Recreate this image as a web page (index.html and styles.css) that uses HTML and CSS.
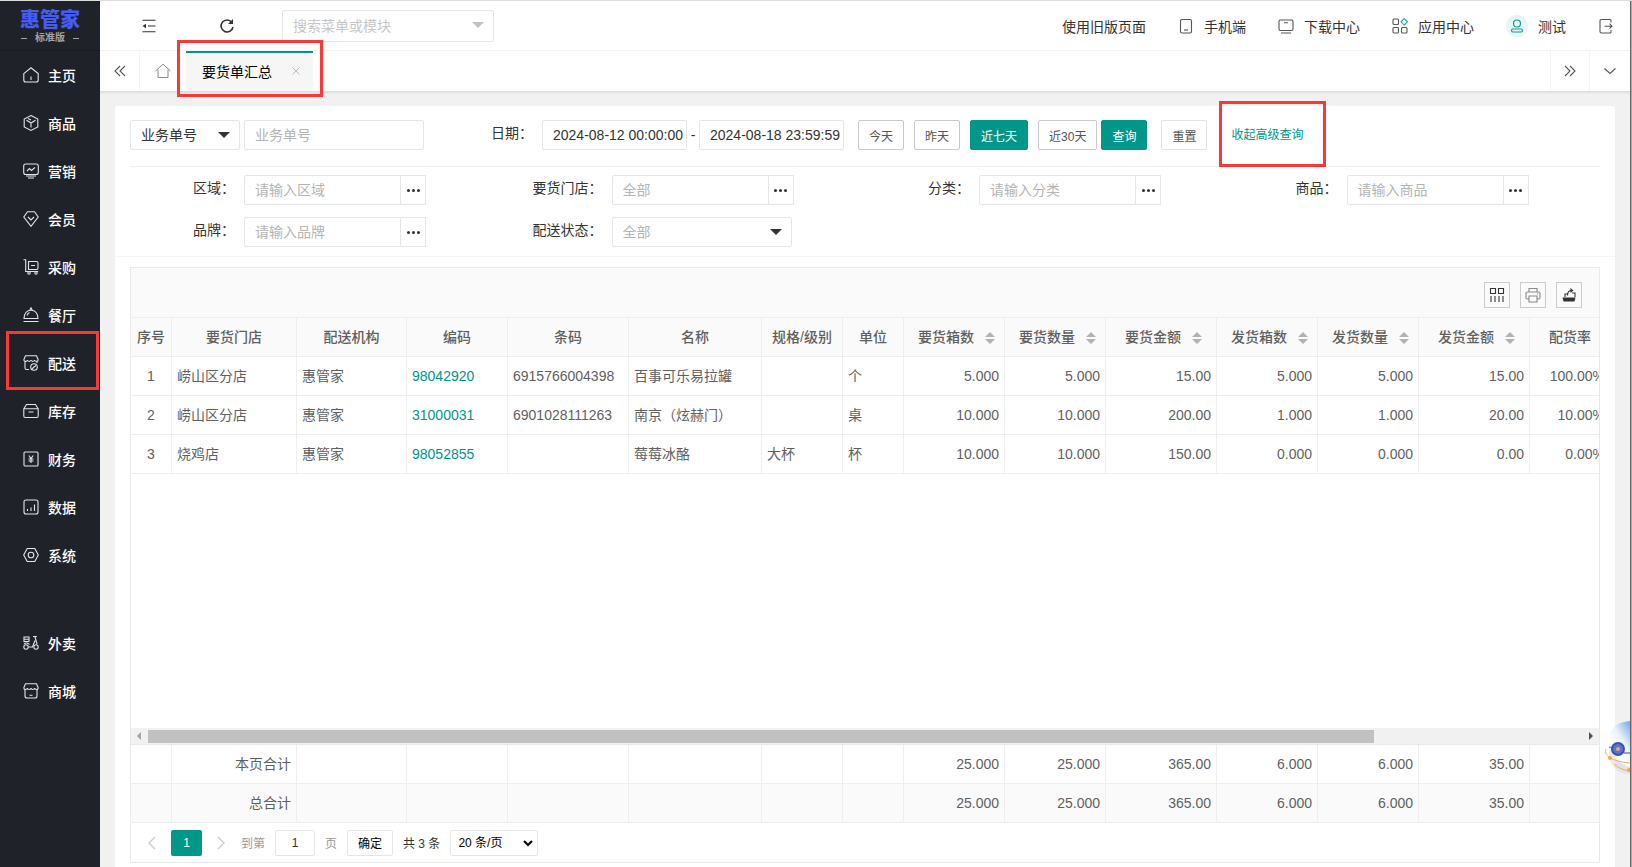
FILE: index.html
```
<!DOCTYPE html>
<html lang="zh-CN">
<head>
    <meta charset="UTF-8">
    <meta name="viewport" content="width=device-width, initial-scale=1.0">
    <title>要货单汇总</title>
    <link rel="stylesheet" href="styles.css">
</head>
<body>
    <div class="app">
        <nav class="side">
            <div class="logo">
                <strong class="logo-name">惠管家</strong>
                <span class="logo-sub">标准版</span>
            </div>
            <a class="nav" href="#"><svg class="ico" viewBox="0 0 16 16"><path d="M.8 6.6 8 .8l7.200 5.800V13a2 2 0 0 1-2 2H2.800a2 2 0 0 1-2-2zM8 9.500V13"/></svg>主页</a>
            <a class="nav" href="#"><svg class="ico" viewBox="0 0 16 16"><path d="M8 .6 14.800 4v8L8 15.400 1.200 12V4zM3.500 5.300 8 8l4.500-2.700M8 8v4.500M5 3.500 8 5"/></svg>商品</a>
            <a class="nav" href="#"><svg class="ico" viewBox="0 0 16 16"><rect x=".7" y="1" width="14.600" height="10.500" rx="2"/><path d="m4 8 2.500-2.500L8.500 7.500 12 4.500M3 13h10M5 15h6"/></svg>营销</a>
            <a class="nav" href="#"><svg class="ico" viewBox="0 0 16 16"><path d="M4.500.8h7l3.700 5.200L8 15.300.8 6zM5 6l3 3 3-3"/></svg>会员</a>
            <a class="nav" href="#"><svg class="ico" viewBox="0 0 16 16"><path d="M.5.8h2.200v11.700h12.500M5.500 2.500h8a1.500 1.500 0 0 1 1.500 1.500v5a1.500 1.500 0 0 1-1.500 1.500h-8zM8 6.500h4"/><circle cx="6" cy="14" r="1.200"/><circle cx="13" cy="14" r="1.200"/></svg>采购</a>
            <a class="nav" href="#"><svg class="ico" viewBox="0 0 16 16"><path d="M1 11.500C1.200 6.500 4 3.200 8 3.200s6.800 3.300 7 8.300zM6.800 3 8 .8 9.200 3M.5 14.500h15M4 8.500C4.500 7 5.300 6.200 6.500 5.600"/></svg>餐厅</a>
            <a class="nav mark" href="#"><svg class="ico" viewBox="0 0 16 16"><path d="M6 14.500H3.500a1.500 1.500 0 0 1-1.500-1.500V6.500M2.500.8h11l1.700 4c0 2-3.200 2-3.600.2-.4 1.800-3.200 1.800-3.600 0-.4 1.800-3.200 1.800-3.600 0C4 7 .8 6.800.8 4.800zM14 6.500V8"/><circle cx="11" cy="12" r="3.300"/><path d="m11 12 2-1.500M8.500 14.500l2.500-2.500"/></svg>配送</a>
            <a class="nav" href="#"><svg class="ico" viewBox="0 0 16 16"><path d="M.8 5.800 3.500 1.500h9l2.700 4.300V13a1.500 1.500 0 0 1-1.500 1.500H2.300A1.500 1.500 0 0 1 .8 13zM.8 5.800h14.400M5.500 9h5"/></svg>库存</a>
            <a class="nav" href="#"><svg class="ico" viewBox="0 0 16 16"><rect x="1" y="1" width="14" height="14" rx="1"/><path d="m5.800 4.500 2.200 3 2.200-3M8 7.500V12M5.500 8h5M5.500 10h5"/></svg>财务</a>
            <a class="nav" href="#"><svg class="ico" viewBox="0 0 16 16"><rect x="1" y="1" width="14" height="14" rx="2"/><path d="M4.500 12v-2M8 12V8.500M11.500 12V5.500"/></svg>数据</a>
            <a class="nav" href="#"><svg class="ico" viewBox="0 0 16 16"><path d="M4.200 1.500h7.600L15.300 8l-3.500 6.500H4.200L.7 8z"/><circle cx="8" cy="8" r="2.800"/></svg>系统</a>
            <a class="nav split" href="#"><svg class="ico" viewBox="0 0 16 16"><path d="M1 2h5v4.500H1zM1 4.200h5M10 1.500h3l-1 1M12 2l2 7M5.500 12h4L12 5.500M1 9c1-1.500 4-1.500 5.500.5"/><circle cx="3" cy="12" r="2.200"/><circle cx="13" cy="12" r="2.200"/></svg>外卖</a>
            <a class="nav" href="#"><svg class="ico" viewBox="0 0 16 16"><path d="M2 6.500V13a2 2 0 0 0 2 2h8a2 2 0 0 0 2-2V6.500M2.500.8h11l1.700 4c0 2.200-3.200 2.200-3.600.2-.4 2-3.200 2-3.600 0-.4 2-3.200 2-3.600 0C4 7 .8 7 .8 4.800zM6.500 12.200h3"/></svg>商城</a>
        </nav>

        <div class="page">
            <header class="top">
                <button class="tool" aria-label="收起菜单"><svg class="ico dark" viewBox="0 0 16 16"><path d="M1.500 2.200h13M7 8h7.500M1.500 13.800h13"/><path class="fill" d="M1.500 8 5 5.800v4.400z"/></svg></button>
                <button class="tool" aria-label="刷新"><svg class="ico dark bold" viewBox="0 0 16 16"><path d="M12.800 4.200A6 6 0 1 0 14 9"/><path class="fill" d="M14 1v5H9z"/></svg></button>
                <div class="search pick">
                    <input type="text" aria-label="搜索" placeholder="搜索菜单或模块">
                </div>
                <div class="links">
                    <a href="#">使用旧版页面</a>
                    <a href="#"><svg class="ico gray" viewBox="0 0 16 16"><rect x="2.500" y="1.500" width="11" height="13.500" rx="1.500"/><path d="M6 12h4"/></svg>手机端</a>
                    <a href="#"><svg class="ico gray" viewBox="0 0 16 16"><rect x="1" y="2" width="14" height="10.500" rx="1.500"/><path d="M6 4.800h4M3 15h10"/></svg>下载中心</a>
                    <a href="#"><svg class="ico gray" viewBox="0 0 16 16"><rect x="1" y="1" width="5.500" height="5.500" rx="1"/><rect x="1" y="9.500" width="5.500" height="5.500" rx="1"/><rect x="9.500" y="9.500" width="5.500" height="5.500" rx="1"/><path class="teal" d="m12.200.6 3.200 3.200L12.200 7 9 3.800z"/></svg>应用中心</a>
                    <a href="#"><svg class="face" viewBox="0 0 22 22"><circle class="disc" cx="11" cy="11" r="11"/><circle cx="11" cy="8.500" r="3.500"/><rect x="5.500" y="14" width="11" height="3" rx="1.500"/></svg>测试</a>
                    <a href="#" aria-label="退出"><svg class="ico gray" viewBox="0 0 16 16"><path d="M13 4.500V2.500a1 1 0 0 0-1-1H3a1 1 0 0 0-1 1v11a1.500 1.500 0 0 0 1.500 1.500H12a1 1 0 0 0 1-1v-2M6.500 8.200H14M11.500 5.700l2.500 2.500-2.500 2.500"/></svg></a>
                </div>
            </header>

            <div class="tabs">
                <button class="tab-btn" aria-label="向左"><svg class="ico gray" viewBox="0 0 16 16"><path d="M8 3 3 8l5 5M13 3 8 8l5 5"/></svg></button>
                <button class="tab-home" aria-label="首页"><svg class="ico light" viewBox="0 0 16 16"><path d="M.5 8 8 1.200 15.500 8M3 6.500v8h10v-8"/></svg></button>
                <div class="tab mark">
                    要货单汇总
                    <button class="close" aria-label="关闭"><svg viewBox="0 0 10 10"><path d="m1.500 1.500 7 7M8.500 1.500l-7 7"/></svg></button>
                </div>
                <button class="tab-btn end" aria-label="向右"><svg class="ico gray" viewBox="0 0 16 16"><path d="m3 3 5 5-5 5M8 3l5 5-5 5"/></svg></button>
                <button class="tab-btn" aria-label="更多"><svg class="ico gray" viewBox="0 0 16 16"><path d="m2.500 5.500 5.500 5 5.500-5"/></svg></button>
            </div>

            <main class="main">
                <div class="card">
                    <form class="filter">
                        <div class="line">
                            <div class="pick kind"><select aria-label="单号类型"><option>业务单号</option></select></div>
                            <input class="field" type="text" aria-label="业务单号" placeholder="业务单号">
                            <label class="label date-label" for="start">日期：</label>
                            <input class="date" id="start" type="text" value="2024-08-12 00:00:00">
                            <span class="dash">-</span>
                            <input class="date" type="text" aria-label="结束日期" value="2024-08-18 23:59:59">
                            <div class="days">
                                <button class="btn" type="button">今天</button>
                                <button class="btn" type="button">昨天</button>
                                <button class="btn on" type="button">近七天</button>
                                <button class="btn" type="button">近30天</button>
                            </div>
                            <button class="btn on" type="button">查询</button>
                            <button class="btn reset" type="reset">重置</button>
                            <a class="more mark" href="#">收起高级查询</a>
                        </div>
                        <div class="grid">
                            <div class="item"><label class="label" for="area">区域：</label><input class="part" id="area" type="text" placeholder="请输入区域"><button class="dots" type="button" aria-label="选择区域"></button></div>
                            <div class="item"><label class="label" for="shop">要货门店：</label><input class="part" id="shop" type="text" placeholder="全部"><button class="dots" type="button" aria-label="选择门店"></button></div>
                            <div class="item"><label class="label" for="type">分类：</label><input class="part" id="type" type="text" placeholder="请输入分类"><button class="dots" type="button" aria-label="选择分类"></button></div>
                            <div class="item"><label class="label" for="goods">商品：</label><input class="part" id="goods" type="text" placeholder="请输入商品"><button class="dots" type="button" aria-label="选择商品"></button></div>
                            <div class="item"><label class="label" for="brand">品牌：</label><input class="part" id="brand" type="text" placeholder="请输入品牌"><button class="dots" type="button" aria-label="选择品牌"></button></div>
                            <div class="item"><label class="label" for="state">配送状态：</label><div class="pick state"><select id="state"><option>全部</option></select></div></div>
                        </div>
                    </form>

                    <section class="list">
                        <div class="bar">
                            <button aria-label="筛选列"><svg class="ico dark" viewBox="0 0 16 16"><path d="M1.500 1.500h5v5h-5zM9.500 1.500h5v5h-5zM2 9v6M6 9v6M10 9v6M14 9v6"/></svg></button>
                            <button aria-label="打印"><svg class="ico print" viewBox="0 0 16 16"><path d="M4 5V1.500h8V5M4 12H2.500A1.500 1.500 0 0 1 1 10.500v-4A1.500 1.500 0 0 1 2.500 5h11A1.500 1.500 0 0 1 15 6.500v4a1.500 1.500 0 0 1-1.500 1.500H12M4 9h8v6H4zM12 7h1"/></svg></button>
                            <button aria-label="导出"><svg class="ico dark" viewBox="0 0 16 16"><path class="fill" d="M1.500 10.500h13l-1 4h-11z"/><path d="M4 10V7h2.500M11 6h3v4M6.500 8.500C6.500 5 8 3.500 11 3.500"/><path class="fill" d="m9.500 1 3 2.500-3 2.500z"/></svg></button>
                        </div>
                        <div class="view">
                            <table class="table">
                                <colgroup><col class="w41"><col class="w125"><col class="w110"><col class="w101"><col class="w121"><col class="w133"><col class="w81"><col class="w61"><col class="w101"><col class="w101"><col class="w111"><col class="w101"><col class="w101"><col class="w111"><col class="w81"></colgroup>
                                <thead>
                                    <tr><th>序号</th><th>要货门店</th><th>配送机构</th><th>编码</th><th>条码</th><th>名称</th><th>规格/级别</th><th>单位</th><th class="sort">要货箱数<i></i></th><th class="sort">要货数量<i></i></th><th class="sort">要货金额<i></i></th><th class="sort">发货箱数<i></i></th><th class="sort">发货数量<i></i></th><th class="sort">发货金额<i></i></th><th>配货率</th></tr>
                                </thead>
                                <tbody>
                                    <tr><td class="mid">1</td><td>崂山区分店</td><td>惠管家</td><td><a href="#">98042920</a></td><td>6915766004398</td><td>百事可乐易拉罐</td><td></td><td>个</td><td class="num">5.000</td><td class="num">5.000</td><td class="num">15.00</td><td class="num">5.000</td><td class="num">5.000</td><td class="num">15.00</td><td class="num">100.00%</td></tr>
                                    <tr><td class="mid">2</td><td>崂山区分店</td><td>惠管家</td><td><a href="#">31000031</a></td><td>6901028111263</td><td>南京（炫赫门）</td><td></td><td>桌</td><td class="num">10.000</td><td class="num">10.000</td><td class="num">200.00</td><td class="num">1.000</td><td class="num">1.000</td><td class="num">20.00</td><td class="num">10.00%</td></tr>
                                    <tr><td class="mid">3</td><td>烧鸡店</td><td>惠管家</td><td><a href="#">98052855</a></td><td></td><td>莓莓冰酪</td><td>大杯</td><td>杯</td><td class="num">10.000</td><td class="num">10.000</td><td class="num">150.00</td><td class="num">0.000</td><td class="num">0.000</td><td class="num">0.00</td><td class="num">0.00%</td></tr>
                                </tbody>
                            </table>
                        </div>
                        <div class="scroll"><span class="left"></span><span class="rail"><span class="thumb"></span></span><span class="right"></span></div>
                        <div class="total">
                            <table class="table">
                                <colgroup><col class="w41"><col class="w125"><col class="w110"><col class="w101"><col class="w121"><col class="w133"><col class="w81"><col class="w61"><col class="w101"><col class="w101"><col class="w111"><col class="w101"><col class="w101"><col class="w111"><col class="w81"></colgroup>
                                <tbody>
                                    <tr><td></td><td class="num">本页合计</td><td></td><td></td><td></td><td></td><td></td><td></td><td class="num">25.000</td><td class="num">25.000</td><td class="num">365.00</td><td class="num">6.000</td><td class="num">6.000</td><td class="num">35.00</td><td></td></tr>
                                    <tr class="all"><td></td><td class="num">总合计</td><td></td><td></td><td></td><td></td><td></td><td></td><td class="num">25.000</td><td class="num">25.000</td><td class="num">365.00</td><td class="num">6.000</td><td class="num">6.000</td><td class="num">35.00</td><td></td></tr>
                                </tbody>
                            </table>
                        </div>
                        <div class="pager">
                            <button class="arrow" aria-label="上一页"><svg viewBox="0 0 8 14"><path d="M7 1 1 7l6 6"/></svg></button>
                            <button class="now">1</button>
                            <button class="arrow" aria-label="下一页"><svg viewBox="0 0 8 14"><path d="m1 1 6 6-6 6"/></svg></button>
                            <label class="pale" for="go">到第</label>
                            <input class="go" id="go" type="text" value="1">
                            <span class="pale">页</span>
                            <button class="ok">确定</button>
                            <span>共 3 条</span>
                            <div class="size">
                                <select aria-label="每页条数"><option>20 条/页</option></select>
                                <svg viewBox="0 0 10 7"><path d="m1 1 4 4 4-4"/></svg>
                            </div>
                        </div>
                    </section>
                </div>
            </main>
        </div>
        <div class="edge"></div>

        <svg class="robot" viewBox="0 0 28 60">
            <defs>
                <linearGradient id="skin" x1=".9" y1="0" x2=".2" y2="1">
                    <stop offset="0" stop-color="#7fb0ec"/>
                    <stop offset=".4" stop-color="#e8f3fd"/>
                    <stop offset=".7" stop-color="#fff"/>
                    <stop offset="1" stop-color="#b9dcf8"/>
                </linearGradient>
            </defs>
            <ellipse cx="27" cy="36" rx="20" ry="20" fill="#d5dbe6" opacity=".6"/>
            <path d="M28 3C14 4 6 12 7 24c0 14 9 22 21 25z" fill="url(#skin)"/>
            <path d="M7 29c2 0 3 1 4 2M22 35h6" stroke="#3c4a94" fill="none"/>
            <circle cx="16" cy="31" r="7" fill="#3b4fae"/>
            <circle cx="16" cy="31" r="5" fill="#5b74cd"/>
            <circle cx="16" cy="31" r="2" fill="#f6a64b"/>
            <path d="M4 31c-3 8 10 13 24 14M12 46c4 4 9 6 16 7" stroke="#f4ac5c" fill="none"/>
            <circle cx="8" cy="40" r="2" fill="#fba53c"/>
            <circle cx="27" cy="52" r="2" fill="#fba53c"/>
        </svg>
    </div>
</body>
</html>
```
FILE: styles.css
```
*{
    margin: 0;
    padding: 0;
    box-sizing: border-box;
}
body,input,select,button{
    font-family: "Liberation Sans","Noto Sans CJK SC",sans-serif;
    font-size: 14px;
    color: #333;
}
a{
    color: inherit;
    text-decoration: none;
}
button{
    border: none;
    background: none;
    cursor: pointer;
}
input,select{
    outline: none;
    border: 1px solid #e6e6e6;
    border-radius: 2px;
    background: #fff;
}
::placeholder{
    color: #b4b4b4;
}
.app{
    display: flex;
    height: 100vh;
    border-top: 1px solid #ddd;
    position: relative;
    overflow: hidden;
}
.ico{
    width: 16px;
    height: 16px;
    fill: none;
    stroke: #e4e5e6;
    stroke-width: 1.1;
    flex: none;
}
.ico.dark{
    stroke: #333;
}
.ico.dark .fill{
    fill: #333;
    stroke: none;
}
.ico.bold{
    stroke-width: 1.6;
}
.ico.gray{
    stroke: #555;
}
.ico.light{
    stroke: #888;
    stroke-width: 1;
}
.ico .teal{
    stroke: #1aa89b;
}

/* 红框标注 */
.mark{
    position: relative;
}
.mark::after{
    content: "";
    position: absolute;
    border: 3px solid #fb3838;
    pointer-events: none;
    z-index: 5;
}

/* 左侧菜单 */
.side{
    width: 100px;
    flex: none;
    background: #20222a;
}
.logo{
    height: 50px;
    padding-top: 8px;
    border-bottom: 1px solid #1a1c22;
    display: flex;
    flex-direction: column;
    align-items: center;
}
.logo-name{
    font-size: 20px;
    font-weight: 900;
    line-height: 22px;
    color: #465cf2;
}
.logo-sub{
    display: flex;
    align-items: center;
    gap: 8px;
    font-size: 10px;
    font-weight: bold;
    line-height: 14px;
    color: #a3a5aa;
}
.logo-sub::before,.logo-sub::after{
    content: "";
    width: 6px;
    height: 1px;
    background: #a3a5aa;
}
.nav{
    height: 48px;
    display: flex;
    align-items: center;
    gap: 9px;
    padding-left: 23px;
    color: #fff;
    font-weight: 500;
}
.nav.split{
    margin-top: 40px;
}
.nav.mark::after{
    left: 6px;
    right: 1px;
    top: -8px;
    bottom: -3px;
}

/* 顶部 */
.page{
    flex: 1;
    min-width: 0;
    display: flex;
    flex-direction: column;
    background: #f1f1f1;
}
.top{
    height: 50px;
    flex: none;
    display: flex;
    align-items: center;
    padding: 0 16px 0 41px;
    background: #fff;
    border-bottom: 1px solid #f3f3f3;
}
.tool{
    display: flex;
    margin-right: 62px;
}
.tool + .tool{
    margin-right: 47px;
}
.pick{
    position: relative;
}
.pick::after{
    content: "";
    position: absolute;
    right: 10px;
    top: 12px;
    border: 6px solid transparent;
    border-top-color: #333;
    border-bottom: none;
    pointer-events: none;
}
.search{
    width: 212px;
}
.search::after{
    border-top-color: #c2c2c2;
}
.search input{
    width: 100%;
    height: 32px;
    padding: 0 10px;
}
.search ::placeholder{
    color: #c6c6c6;
}
.links{
    margin-left: auto;
    display: flex;
    align-items: center;
    gap: 32px;
}
.links a{
    display: flex;
    align-items: center;
    gap: 10px;
}
.face{
    width: 22px;
    height: 22px;
    fill: none;
    stroke: #169c8f;
    stroke-width: 1.2;
}
.face .disc{
    fill: #e6f5f3;
    stroke: none;
}

/* 标签栏 */
.tabs{
    height: 41px;
    flex: none;
    display: flex;
    background: #fff;
    border-bottom: 1px solid #ddd;
    box-shadow: 0 1px 2px rgba(0,0,0,.08);
    position: relative;
}
.tab-btn{
    width: 40px;
    display: flex;
    align-items: center;
    justify-content: center;
    border-right: 1px solid #f3f3f3;
}
.tab-btn.end{
    margin-left: auto;
    border-left: 1px solid #f3f3f3;
}
.tab-btn:last-child{
    border-right: none;
}
.tab-home{
    width: 46px;
    display: flex;
    align-items: center;
    justify-content: center;
}
.tab{
    display: flex;
    align-items: center;
    gap: 19px;
    padding: 0 12px 2px 16px;
    background: #f6f6f6;
    border-top: 2px solid #009688;
    color: #000;
}
.tab.mark::after{
    left: -9px;
    right: -10px;
    top: -13px;
    bottom: -6px;
}
.close{
    display: flex;
}
.close svg{
    width: 10px;
    height: 10px;
    stroke: #bbb;
}

.main{
    flex: 1;
    min-height: 0;
    padding: 14px 15px 0;
    display: flex;
}
.card{
    flex: 1;
    min-width: 0;
    display: flex;
    flex-direction: column;
    background: #fff;
    border-radius: 2px 2px 0 0;
}

/* 查询条件 */
.filter{
    padding: 14px 15px 9px;
    border-bottom: 1px solid #f6f6f6;
}
.line{
    display: flex;
    padding-bottom: 16px;
    border-bottom: 1px solid #eee;
}
.filter input,.filter select{
    height: 30px;
    padding: 0 10px;
}
.filter select{
    width: 100%;
    appearance: none;
}
.kind{
    width: 110px;
    margin-right: 4px;
}
.field{
    width: 180px;
}
.label{
    width: 114px;
    padding-right: 9px;
    line-height: 26px;
    text-align: right;
}
.date-label{
    width: 118px;
}
.filter .date{
    width: 145px;
    padding-right: 0;
}
.dash{
    width: 12px;
    line-height: 30px;
    text-align: center;
}
.days{
    display: flex;
    gap: 10px;
    margin: 0 4px 0 14px;
}
.btn{
    height: 30px;
    padding: 0 10px;
    border: 1px solid #c9c9c9;
    border-radius: 2px;
    background: #fff;
    font-size: 12px;
    color: #555;
}
.btn.on{
    background: #009688;
    border-color: #009688;
    color: #fff;
}
.btn.reset{
    margin: 0 24px 0 14px;
    border-color: #e2e2e2;
}
.more{
    font-size: 12px;
    line-height: 30px;
    color: #009688;
}
.more.mark::after{
    left: -12px;
    right: -23px;
    top: -19px;
    bottom: -17px;
}
.grid{
    display: grid;
    grid-template-columns: repeat(4,1fr);
    row-gap: 12px;
    padding-top: 8px;
}
.item{
    display: flex;
}
.filter .part{
    width: 157px;
    border-radius: 2px 0 0 2px;
}
.dots{
    width: 25px;
    border: 1px solid #e6e6e6;
    border-left: none;
    display: flex;
    align-items: center;
    justify-content: center;
}
.dots::before{
    content: "";
    width: 3px;
    height: 3px;
    border-radius: 50%;
    background: #333;
    box-shadow: -5px 0 #333, 5px 0 #333;
}
.state{
    width: 180px;
}
.state select{
    color: #b4b4b4;
}

/* 表格 */
.list{
    flex: 1;
    min-height: 0;
    display: flex;
    flex-direction: column;
    margin: 10px 15px 4px;
    border: 1px solid #e9e9e9;
}
.bar{
    height: 50px;
    flex: none;
    display: flex;
    justify-content: flex-end;
    gap: 10px;
    padding: 14px 17px 0 0;
    background: #fafafa;
    border-bottom: 1px solid #eee;
}
.bar button{
    width: 26px;
    height: 26px;
    border: 1px solid #ccc;
    display: flex;
    align-items: center;
    justify-content: center;
}
.ico.print{
    stroke: #888;
}
.view{
    flex: 1;
    min-height: 0;
    overflow: hidden;
}
.table{
    width: 1480px;
    table-layout: fixed;
    border-collapse: separate;
    border-spacing: 0;
    color: #5f5f5f;
}
.w41{ width: 41px; }
.w61{ width: 61px; }
.w81{ width: 81px; }
.w101{ width: 101px; }
.w110{ width: 110px; }
.w111{ width: 111px; }
.w121{ width: 121px; }
.w125{ width: 125px; }
.w133{ width: 133px; }
.table th,.table td{
    height: 39px;
    padding: 0 5px;
    border-right: 1px solid #eee;
    border-bottom: 1px solid #eee;
    line-height: 28px;
    text-align: left;
    white-space: nowrap;
}
.table th{
    background: #fafafa;
    font-weight: 500;
    text-align: center;
}
.table th.sort{
    padding-left: 10px;
}
.sort i{
    display: inline-block;
    width: 10px;
    height: 12px;
    margin-left: 11px;
    vertical-align: -2px;
    background: #b2b2b2;
    clip-path: polygon(50% 0,100% 42%,0 42%,0 58%,100% 58%,50% 100%,0 58%,0 42%);
}
.table .mid{
    text-align: center;
}
.table .num{
    text-align: right;
}
.table a{
    color: #009688;
}
.scroll{
    height: 17px;
    flex: none;
    display: flex;
    align-items: center;
    padding: 0 6px;
    background: #f1f1f1;
    border-bottom: 1px solid #e9e9e9;
}
.scroll .left,.scroll .right{
    border: 4px solid transparent;
}
.scroll .left{
    border-left: none;
    border-right-color: #a3a3a3;
}
.scroll .right{
    border-right: none;
    border-left-color: #505050;
}
.rail{
    flex: 1;
    margin: 0 7px;
}
.thumb{
    display: block;
    width: 85.5%;
    height: 13px;
    background: #c1c1c1;
}
.total{
    flex: none;
    overflow: hidden;
}
.all{
    background: #fafafa;
}

/* 分页 */
.pager{
    height: 39px;
    flex: none;
    display: flex;
    align-items: center;
    gap: 10px;
    padding: 0 0 0 17px;
    font-size: 12px;
}
.pager button,.pager input,.pager select{
    height: 26px;
    font-size: 12px;
}
.arrow{
    width: 8px;
    margin-right: 5px;
    display: flex;
    align-items: center;
}
.arrow svg{
    width: 8px;
    height: 14px;
    fill: none;
    stroke: #ccc;
    stroke-width: 1.4;
}
.now{
    width: 31px;
    background: #009688;
    border-radius: 2px;
    color: #fff;
}
.now + .arrow{
    margin: 0 6px 0 5px;
}
.pale{
    color: #999;
}
.go{
    width: 40px;
    text-align: center;
}
.ok{
    width: 46px;
    border: 1px solid #e6e6e6;
    border-radius: 2px;
    color: #000;
}
.size{
    position: relative;
}
.size select{
    width: 88px;
    padding: 0 7px;
    appearance: none;
    color: #000;
}
.size svg{
    position: absolute;
    right: 5px;
    top: 10px;
    width: 10px;
    height: 7px;
    fill: none;
    stroke: #000;
    stroke-width: 2;
    pointer-events: none;
}

.edge{
    width: 2px;
    flex: none;
    background: #aaa;
    border-left: 1px solid #666;
}
.robot{
    position: absolute;
    right: 2px;
    top: 717px;
    width: 28px;
    height: 60px;
}
```
